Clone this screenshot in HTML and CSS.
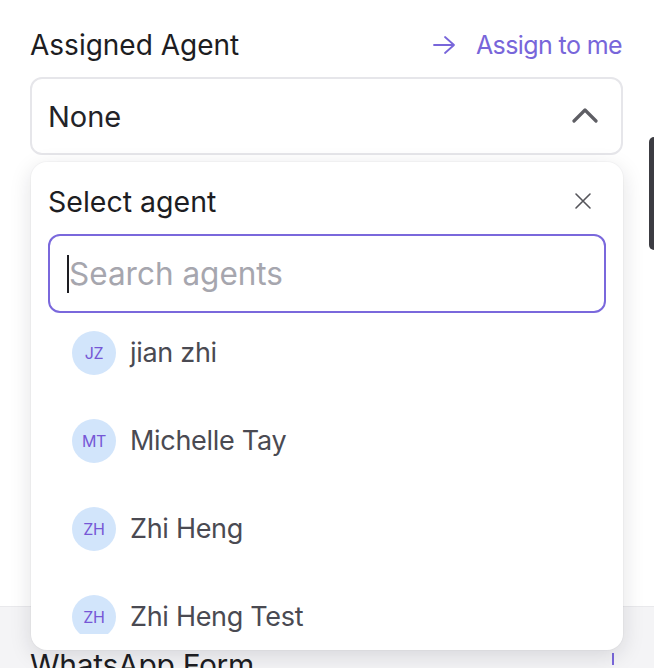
FILE: index.html
```html
<!DOCTYPE html>
<html>
<head>
<meta charset="utf-8">
<link rel="stylesheet" href="styles.css">
</head>
<body>
<div class="page">
  <section class="field">
    <div class="field-head">
      <span class="field-label">Assigned Agent</span>
      <a class="assign-me">
        <svg class="arrow" width="24" height="20" viewBox="0 0 24 20" fill="none" stroke="currentColor" stroke-width="1.8" stroke-linecap="round" stroke-linejoin="round"><path d="M2 10h20M13 2l9 8-9 8"/></svg>
        <span>Assign to me</span>
      </a>
    </div>
    <div class="select-wrap">
      <div class="select-box">
        <span class="select-value">None</span>
        <svg class="chevron" width="26" height="16" viewBox="0 0 26 16" fill="none" stroke="currentColor" stroke-width="3.2" stroke-linecap="round" stroke-linejoin="round"><path d="M2 14L13 3l11 11"/></svg>
      </div>
      <div class="dropdown">
        <div class="dropdown-head">
          <span class="dropdown-title">Select agent</span>
          <svg class="close" width="18" height="18" viewBox="0 0 18 18" fill="none" stroke="currentColor" stroke-width="1.6" stroke-linecap="round"><path d="M2 2l14 14M16 2L2 16"/></svg>
        </div>
        <div class="search">
          <span class="caret"></span>
          <span class="placeholder">Search agents</span>
        </div>
        <ul class="agent-list">
          <li class="agent"><span class="avatar">JZ</span><span class="agent-name">jian zhi</span></li>
          <li class="agent"><span class="avatar">MT</span><span class="agent-name">Michelle Tay</span></li>
          <li class="agent"><span class="avatar">ZH</span><span class="agent-name">Zhi Heng</span></li>
          <li class="agent"><span class="avatar">ZH</span><span class="agent-name">Zhi Heng Test</span></li>
        </ul>
      </div>
    </div>
  </section>
  <section class="next-section">
    <span class="next-title">WhatsApp Form</span>
    <span class="next-mark"></span>
  </section>
  <div class="side-edge"></div>
</div>
</body>
</html>
```

FILE: styles.css
```css
* { box-sizing: border-box; margin: 0; padding: 0; }
html, body { width: 654px; height: 668px; overflow: hidden; background: #ffffff; }
body { font-family: "Inter", "Noto Sans", sans-serif; color: #1d1d22; }

.page { position: relative; width: 654px; height: 668px; display: flex; flex-direction: column; }

.field { padding: 28px 31px 0 30px; height: 606px; }
.field-head { display: flex; justify-content: space-between; align-items: center; height: 34px; }
.field-label { font-size: 28px; letter-spacing: 0; color: #1d1d22; font-weight: 400; }
.assign-me { display: flex; align-items: center; gap: 20px; color: #7866da; font-size: 25px; letter-spacing: -0.6px; margin-right: 1px; }
.arrow { display: block; }

.select-wrap { position: relative; margin-top: 15px; }
.select-box { height: 78px; border: 2px solid #e6e6ea; border-radius: 12px; display: flex; align-items: center; justify-content: space-between; padding: 0 23px 0 16px; }
.select-value { font-size: 29px; letter-spacing: 0; color: #232328; }
.chevron { color: #5e5e64; display: block; margin-top: -3px; }

.dropdown { position: absolute; left: 1px; right: 0; top: 85px; height: 488px; background: #ffffff; border-radius: 16px; box-shadow: 0 6px 22px rgba(20, 20, 40, 0.13), 0 0 0 1px rgba(0, 0, 0, 0.025); padding: 0 17px; z-index: 5; }
.dropdown-head { display: flex; justify-content: space-between; align-items: center; height: 72px; padding: 6px 14px 0 0; }
.dropdown-title { font-size: 28.5px; letter-spacing: 0; color: #1d1d22; }
.close { color: #55555b; display: block; }

.search { height: 79px; border: 2px solid #7a68dc; border-radius: 12px; display: flex; align-items: center; padding-left: 17px; }
.caret { width: 2px; height: 38px; background: #1d1d22; margin-top: 1px; }
.placeholder { font-size: 31.5px; letter-spacing: 0; color: #a6a6ae; margin-left: 0; }

.agent-list { list-style: none; height: 321px; overflow: hidden; }
.agent { height: 88px; display: flex; align-items: flex-start; padding: 19px 0 0 24px; gap: 14px; }
.agent:first-child { padding-top: 18px; height: 87px; }
.avatar { width: 44px; height: 44px; border-radius: 50%; background: #d2e5fb; color: #7657d6; font-size: 16px; display: flex; align-items: center; justify-content: center; flex-shrink: 0; letter-spacing: -0.3px; }
.agent-name { font-size: 27px; letter-spacing: -0.3px; color: #4a4a52; line-height: 44px; }

.next-section { flex: 1; background: #f4f4f6; border-top: 1px solid #e9e9ec; display: flex; justify-content: space-between; align-items: flex-end; padding: 0 40px 0 30px; }
.next-title { font-size: 30px; letter-spacing: -0.3px; color: #1d1d22; line-height: 30px; margin-bottom: -12px; }
.next-mark { width: 2px; height: 12px; background: #7a68dc; margin-bottom: 3px; }

.side-edge { position: absolute; right: 0; top: 137px; width: 5px; height: 113px; background: #3c3c42; border-radius: 6px 0 0 6px; }
```
